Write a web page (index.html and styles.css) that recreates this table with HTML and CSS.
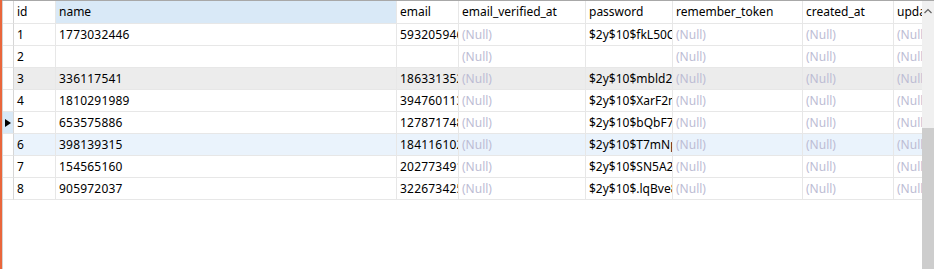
FILE: index.html
```html
<!DOCTYPE html>
<html lang="zh">
<head>
  <meta charset="UTF-8"/>
  <title>users</title>
  <link rel="stylesheet" href="styles.css">
</head>
<body>
  <div class="frame">
    <div class="grid-view">
      <div class="grid-body">
        <table class="data-grid">
          <colgroup>
            <col class="c-ind"><col class="c-id"><col class="c-name"><col class="c-email">
            <col class="c-eva"><col class="c-pass"><col class="c-token"><col class="c-created"><col class="c-upd">
          </colgroup>
          <thead>
            <tr>
              <th class="ind"></th>
              <th>id</th>
              <th class="sorted">name</th>
              <th>email</th>
              <th>email_verified_at</th>
              <th>password</th>
              <th>remember_token</th>
              <th>created_at</th>
              <th>updated_at</th>
            </tr>
          </thead>
          <tbody>
            <tr>
              <td class="ind"></td><td>1</td><td class="num">1773032446</td><td class="num">593205946@qq.com</td>
              <td class="null">(Null)</td><td>$2y$10$fkL50Cq8PbV1u7Ew</td><td class="null">(Null)</td><td class="null">(Null)</td><td class="null">(Null)</td>
            </tr>
            <tr>
              <td class="ind"></td><td>2</td><td></td><td></td>
              <td class="null">(Null)</td><td></td><td class="null">(Null)</td><td class="null">(Null)</td><td class="null">(Null)</td>
            </tr>
            <tr class="hover">
              <td class="ind"></td><td>3</td><td class="num">336117541</td><td class="num">186331352@qq.com</td>
              <td class="null">(Null)</td><td>$2y$10$mbld2Wq0zKd8sPa</td><td class="null">(Null)</td><td class="null">(Null)</td><td class="null">(Null)</td>
            </tr>
            <tr>
              <td class="ind"></td><td>4</td><td class="num">1810291989</td><td class="num">394760113@qq.com</td>
              <td class="null">(Null)</td><td>$2y$10$XarF2mKw7hRt1c</td><td class="null">(Null)</td><td class="null">(Null)</td><td class="null">(Null)</td>
            </tr>
            <tr>
              <td class="ind current"><span class="arrow"></span></td><td>5</td><td class="num">653575886</td><td class="num">127871748@qq.com</td>
              <td class="null">(Null)</td><td>$2y$10$bQbF7nUq3eLx0s</td><td class="null">(Null)</td><td class="null">(Null)</td><td class="null">(Null)</td>
            </tr>
            <tr class="selected">
              <td class="ind"></td><td>6</td><td class="num">398139315</td><td class="num">184116102@qq.com</td>
              <td class="null">(Null)</td><td>$2y$10$T7mNpQ4rVd9kJe</td><td class="null">(Null)</td><td class="null">(Null)</td><td class="null">(Null)</td>
            </tr>
            <tr>
              <td class="ind"></td><td>7</td><td class="num">154565160</td><td class="num">202773491@qq.com</td>
              <td class="null">(Null)</td><td>$2y$10$SN5A2yHc6wGf3o</td><td class="null">(Null)</td><td class="null">(Null)</td><td class="null">(Null)</td>
            </tr>
            <tr>
              <td class="ind"></td><td>8</td><td class="num">905972037</td><td class="num">322673425@qq.com</td>
              <td class="null">(Null)</td><td>$2y$10$.lqBve8Zt1mRk5</td><td class="null">(Null)</td><td class="null">(Null)</td><td class="null">(Null)</td>
            </tr>
          </tbody>
        </table>
      </div>
      <div class="scrollbar">
        <div class="scroll-up">
          <svg width="12" height="17" viewBox="0 0 12 17"><polyline points="2.5,12 6,8.5 9.5,12" fill="none" stroke="#606060" stroke-width="1.2"/></svg>
        </div>
        <div class="scroll-track"><div class="scroll-thumb"></div></div>
      </div>
    </div>
  </div>
</body>
</html>
```

FILE: styles.css
```css
/* base */
* { box-sizing:border-box; }
html, body { margin:0; padding:0; background:#fff; }
body {
  font-family:"Noto Sans","Noto Sans CJK SC",sans-serif;
  font-size:12px; color:#000;
}

/* frame: orange edge of the active tab */
.frame {
  height:269px;
  border-left:2px solid #e9663b;
}
.grid-view {
  display:flex;
  height:100%;
  border-top:1px solid #a8a8a8;
}
.grid-body {
  flex:1; min-width:0;
  overflow:hidden;
  border-left:1px solid #d4d4d4;
}

/* table */
.data-grid {
  border-collapse:separate;
  border-spacing:0;
  table-layout:fixed;
  width:981px;
}
.c-ind { width:11px; }
.c-id { width:42px; }
.c-name { width:341px; }
.c-email { width:62px; }
.c-eva { width:127px; }
.c-pass { width:87px; }
.c-token { width:130px; }
.c-created { width:91px; }
.c-upd { width:90px; }

.data-grid th,
.data-grid td {
  height:22px;
  padding:0 0 0 3px;
  border-right:1px solid #e7e7e7;
  border-bottom:1px solid #e7e7e7;
  white-space:nowrap;
  overflow:hidden;
  text-align:left;
  font-weight:normal;
  line-height:21px;
}
.data-grid thead th { height:23px; line-height:22px; }
.data-grid th.sorted { background:#d9e9f7; }
.data-grid .ind { padding:0; border-right-color:#d6d6d6; }

.data-grid td.num { letter-spacing:.2px; }
.data-grid td.null { color:#bcbcd4; }
.data-grid tr.hover td { background:#ececec; }
.data-grid tr.selected td { background:#eaf3fc; }
.data-grid tr td.ind { background:#fff; }
.data-grid tr td.ind.current { background:#d9e9f7; }

.arrow {
  display:block;
  width:0; height:0;
  margin-left:2px;
  border-top:4.5px solid transparent;
  border-bottom:4.5px solid transparent;
  border-left:6px solid #000;
}

/* vertical scrollbar */
.scrollbar {
  flex:0 0 12px;
  background:#f0f0f0;
  display:flex; flex-direction:column;
}
.scroll-up { height:17px; }
.scroll-up svg { display:block; }
.scroll-track {
  flex:1;
  padding-top:110px;
  display:flex;
}
.scroll-thumb {
  flex:1;
  background:#cdcdcd;
}
```
